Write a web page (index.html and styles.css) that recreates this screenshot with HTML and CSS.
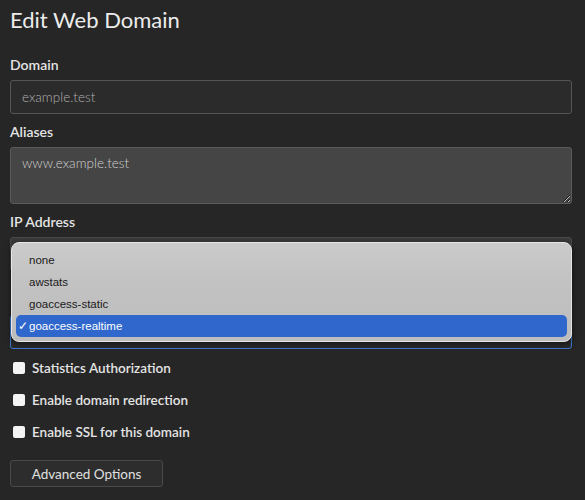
FILE: index.html
```html
<!DOCTYPE html>
<html lang="en">
<head>
    <meta charset="UTF-8">
    <meta name="viewport" content="width=device-width, initial-scale=1.0">
    <title>Edit Web Domain</title>
    <link rel="stylesheet" href="styles.css">
</head>
<body>
    <div class="page">
        <h1 class="title">Edit Web Domain</h1>

        <div class="field first">
            <label class="label">Domain</label>
            <input class="input" type="text" value="example.test">
        </div>

        <div class="field">
            <label class="label">Aliases</label>
            <textarea class="input textarea">www.example.test</textarea>
        </div>

        <div class="field stats">
            <label class="label">IP Address</label>
            <div class="input select"></div>
            <div class="input select focused"></div>

            <!-- open menu of the statistics select -->
            <ul class="menu">
                <li class="option">none</li>
                <li class="option">awstats</li>
                <li class="option">goaccess-static</li>
                <li class="option selected"><span class="tick">✓</span>goaccess-realtime</li>
            </ul>
        </div>

        <div class="checks">
            <label class="check"><input type="checkbox" class="box"> Statistics Authorization</label>
            <label class="check"><input type="checkbox" class="box"> Enable domain redirection</label>
            <label class="check"><input type="checkbox" class="box"> Enable SSL for this domain</label>
        </div>

        <button class="button">Advanced Options</button>
    </div>
</body>
</html>
```

FILE: styles.css
```css
body {
    margin: 0;
    background-color: #262626;
    color: #e4e4e4;
    font-family: Lato, "Open Sans", sans-serif;
}

.page {
    padding: 0 13px 0 10px;
}

.title {
    margin: 0;
    padding-top: 5px;
    font-size: 22px;
    font-weight: 400;
    line-height: 30px;
    color: #ececec;
}

.field {
    margin-top: 8px;
}

.field.first {
    margin-top: 20px;
}

.label {
    display: block;
    font-size: 14px;
    font-weight: 600;
    line-height: 20px;
    margin-bottom: 5px;
}

.input {
    display: block;
    box-sizing: border-box;
    width: 100%;
    height: 34px;
    padding: 0 11px;
    background-color: #2b2b2b;
    border: 1px solid #555;
    border-radius: 3px;
    color: #b0b0b0;
    font-family: inherit;
    font-size: 13.5px;
    font-weight: 300;
    outline: none;
}

.textarea {
    height: 57px;
    padding-top: 7px;
    background-color: #454545;
    border-color: #5a5a5a;
    color: #d2d2d2;
    resize: vertical;
}

.select {
    background-color: #3a3a3a;
    border-color: #4a4a4a;
}

.focused {
    margin-top: 44px;
    background-color: #2b2b2b;
    border-color: #3d7ad6;
}

.stats {
    position: relative;
}

.menu {
    position: absolute;
    top: 30px;
    left: 1px;
    right: 0;
    margin: 0;
    padding: 6px 4px 4px;
    list-style: none;
    background: linear-gradient(#cbcbcb, #c2c2c2 40%, #bdbdbd);
    border: 1px solid #e6e6e6;
    border-radius: 8px;
    box-shadow: 0 2px 6px rgba(0, 0, 0, 0.55);
    font-family: "Liberation Sans", Arial, sans-serif;
    font-size: 11.5px;
    color: #1a1a1a;
}

.option {
    height: 22px;
    line-height: 22px;
    padding-left: 13px;
    border-radius: 5px;
}

.selected {
    position: relative;
    background-color: #2f67cc;
    color: #fff;
}

.tick {
    position: absolute;
    left: 2px;
    font-size: 12px;
}

.checks {
    margin-top: 3px;
}

.check {
    display: flex;
    align-items: center;
    height: 32px;
    font-size: 13.5px;
    font-weight: 600;
}

.box {
    appearance: none;
    width: 12px;
    height: 12px;
    margin: 0 7px 0 3px;
    background-color: #f4f4f4;
    border-radius: 2px;
}

.button {
    margin-top: 12px;
    width: 153px;
    height: 27px;
    background-color: #2d2d2d;
    border: 1px solid #4a4a4a;
    border-radius: 3px;
    color: #e0e0e0;
    font-family: inherit;
    font-size: 13.5px;
}
```
